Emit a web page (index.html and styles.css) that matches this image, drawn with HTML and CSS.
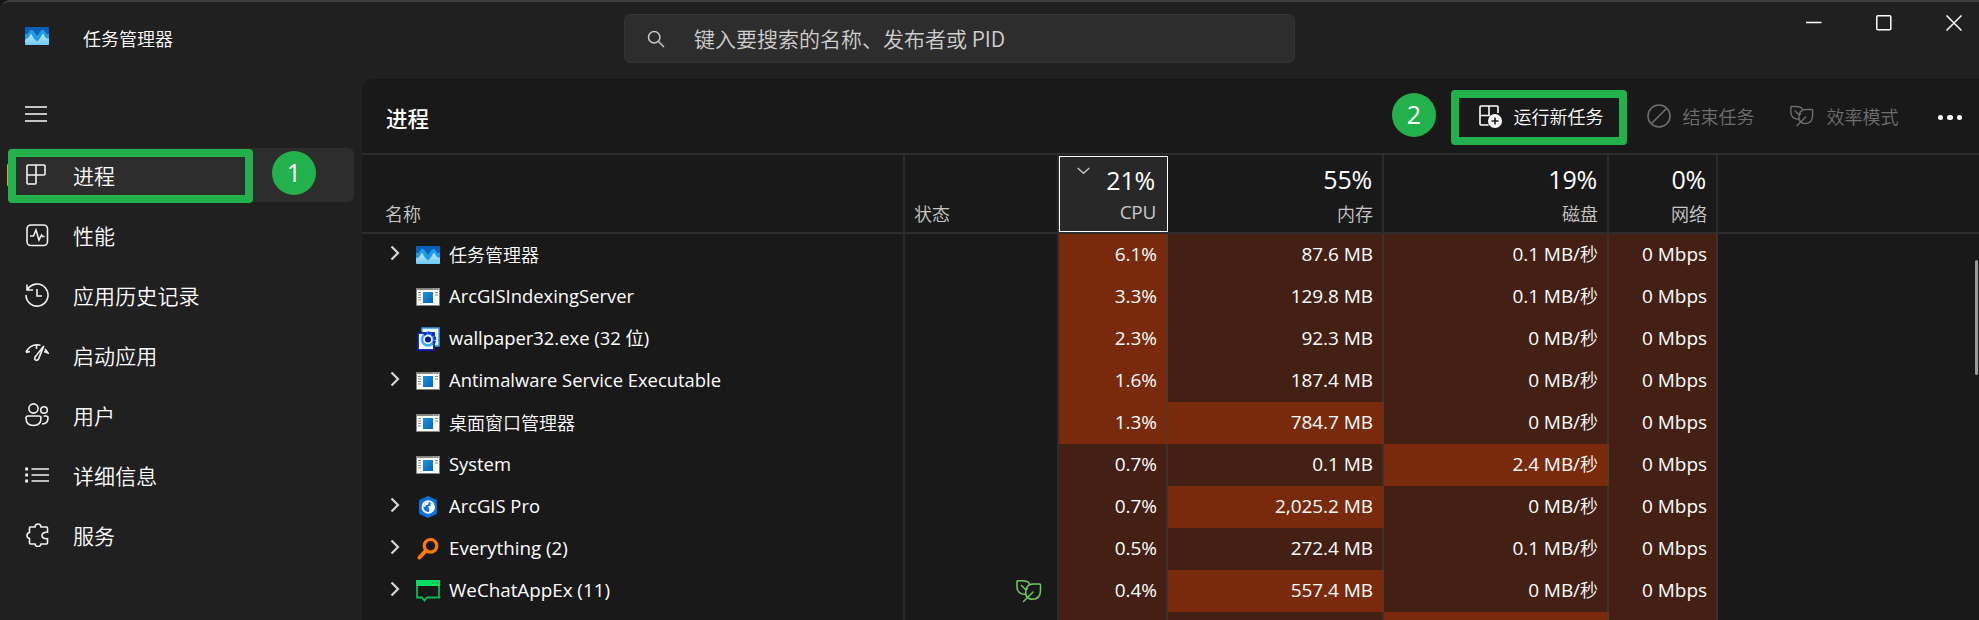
FILE: index.html
```html
<!DOCTYPE html>
<html lang="zh-CN">
  <head>
    <meta charset="utf-8">
    <title>任务管理器</title>
    <link rel="stylesheet" href="styles.css">
  </head>

  <body>
    <svg class="sprite">
      <linearGradient id="gTop" x1="0" y1="0" x2="0" y2="1"><stop offset="0" stop-color="#0a5fb4"/><stop offset="1" stop-color="#0c66bd"/></linearGradient>
      <linearGradient id="gFront" x1="0" y1="0" x2="0" y2="1"><stop offset="0" stop-color="#c5ecff"/><stop offset="1" stop-color="#6cc8f8"/></linearGradient>
      <linearGradient id="gApp" x1="0" y1="0" x2="1" y2="1"><stop offset="0" stop-color="#1b95e0"/><stop offset="1" stop-color="#0565b8"/></linearGradient>
      <symbol id="taskmgr" viewBox="0 0 24 18">
        <rect width="24" height="18" rx="1" fill="url(#gTop)"/>
        <path d="M0 7h2.500L5 3.500q1.500-1.500 3 0L12 9l4-5.500q1.500-1.500 3 0L21.500 7H24v9H0z" fill="#1e9be6"/>
        <path d="M0 12.500q2-.5 3.500-2L6 6.500l2.500 4.500q2 2 3.500 3.500 2-1.500 3.500-4L18 6.500l2.500 4q1.500 1.500 3.500 1V17q0 1-1 1H1q-1 0-1-1z" fill="url(#gFront)"/>
      </symbol>
      <symbol id="exe" viewBox="0 0 24 18">
        <rect width="24" height="18" fill="#85857f"/>
        <rect x="1" y="2" width="22" height="15" fill="#fff"/>
        <path d="M17 1h1M19.500 1h1M22 1h1" stroke="#ddd"/>
        <path d="M2 4.500h3M2 7h3M2 9.500h3M2 12h3M19 4.500h3M19 7h3" stroke="#8a8a8a"/>
        <rect x="7" y="4" width="10" height="11" fill="url(#gApp)"/>
      </symbol>
      <symbol id="wallpaper" viewBox="0 0 24 24">
        <rect x="6" y="1" width="17" height="18" fill="#e8f5ff" stroke="#3b9ce6" stroke-width="1.500"/>
        <rect x="2" y="6" width="16" height="17" fill="#f4f8ff" stroke="#0a1fae" stroke-width="1.800"/>
        <circle cx="12" cy="12.500" r="6" fill="none" stroke="#3fa9f5" stroke-width="2.500"/>
        <path d="M8 7.500q5-3.500 9 .5 4 5-.5 9.500" fill="none" stroke="#0a2fc0" stroke-width="2.800" stroke-dasharray="3 1"/>
        <circle cx="12" cy="12.500" r="3" fill="#08129a"/>
      </symbol>
      <symbol id="arcgis" viewBox="0 0 24 26">
        <path d="M12 1l9.500 4.500q.5 8 0 15L12 25l-9.500-4.500q-.5-8 0-15z" fill="#0f6fe0"/>
        <circle cx="12.300" cy="13" r="6.300" fill="#0f6fe0" stroke="#fff" stroke-width="2"/>
        <path d="M9 8l4-.5-1 3-2.500.5-.5 2-2-.5zM12 12.500l3-1-.5-3 3.500 2 .5 3.500-3 4.500-2.500.5.500-3z" fill="#fff"/>
      </symbol>
      <symbol id="everything" viewBox="0 0 24 24">
        <circle cx="14.500" cy="8.800" r="6.300" fill="none" stroke="#ff7a00" stroke-width="3.200"/>
        <path d="M10 13.500l-6.500 7" stroke="#ff7a00" stroke-width="4" stroke-linecap="round"/>
      </symbol>
      <symbol id="wechat" viewBox="0 0 24 22">
        <path d="M1 3v14.500h5l2.500 3 2.500-3h12V3" fill="none" stroke="#07b853" stroke-width="1.800"/>
        <rect width="24" height="6" fill="#07dc66"/>
        <path d="M16 3h1.200M18.500 3h1.200M21 3h1.200" stroke="#067a3c" stroke-width="1.200"/>
      </symbol>
      <symbol id="leaf" viewBox="0 0 26 24">
        <path d="M9.500 15.500Q1 15 1 8V2.500q0-.8.800-.8h4.700q5.500 0 7 3M10 16.500q-1.600-11.500 7.500-11.500h6.200q.8 0 .8.800v5.500q0 9-8.500 9-3.500 0-6-3.800zM7.500 22.500l9.500-9.500M5.500 6.500l4.500 4.500 1.500-1.500" fill="none" stroke="currentColor" stroke-width="1.500" stroke-linecap="round" stroke-linejoin="round"/>
      </symbol>
      <symbol id="chevron" viewBox="0 0 10 16">
        <path d="M1.500 1.500L8 8l-6.500 6.500" fill="none" stroke="#d6d6d6" stroke-width="2.200"/>
      </symbol>
    </svg>

    <div class="window">
      <header class="titlebar">
        <svg class="logo"><use href="#taskmgr"/></svg>
        <span class="app-name">任务管理器</span>
        <div class="search">
          <svg width="18" height="18" viewBox="0 0 18 18" fill="none" stroke="#c8c8c8" stroke-width="1.500"><circle cx="7.200" cy="7.200" r="5.700"/><path d="M11.500 11.500l5.500 5.500"/></svg>
          <span>键入要搜索的名称、发布者或 PID</span>
        </div>
        <div class="win-controls">
          <svg viewBox="0 0 16 16"><path d="M0 7.500h15.500"/></svg>
          <svg viewBox="0 0 16 16"><rect x=".8" y=".8" width="14" height="14" rx="1"/></svg>
          <svg viewBox="0 0 16 16"><path d="M.5.5l15 15M15.500.5l-15 15"/></svg>
        </div>
      </header>

      <div class="content">
        <nav class="sidebar">
          <div class="hamburger"><i></i><i></i><i></i></div>
          <div class="nav-item active">
            <svg viewBox="0 0 24 24"><path d="M3 2h16q1 0 1 1v8q0 1-1 1h-8v8q0 1-1 1H3q-1 0-1-1V3q0-1 1-1zM11 2v10M2 12h9"/></svg>
            <span>进程</span>
          </div>
          <div class="nav-item">
            <svg viewBox="0 0 24 24"><rect x="2" y="2" width="20.500" height="20.500" rx="4"/><path d="M5 13h3.500l2.500-6 3 10 2.500-5 1 1.500h2"/></svg>
            <span>性能</span>
          </div>
          <div class="nav-item">
            <svg viewBox="0 0 24 24"><path d="M2.500 6.500A11 11 0 1 1 1 12M2 1.500V7h6M12 6v7h5"/></svg>
            <span>应用历史记录</span>
          </div>
          <div class="nav-item">
            <svg viewBox="0 0 24 24"><path d="M1 9q4-7.200 11-7.200 2 0 3.500.5M1 9.500l4-1M11.500 2v4M20 6l3 4-4-1.500M18.800 3l-5.300 13q-1.400 2-3 1-1.200-1-.5-2.800z"/></svg>
            <span>启动应用</span>
          </div>
          <div class="nav-item">
            <svg viewBox="0 0 24 24"><circle cx="8.500" cy="5.500" r="4.600"/><circle cx="19" cy="7" r="3.300"/><path d="M3 13h11q2 0 2 2 0 7.500-7.500 7.500T1 15q0-2 2-2zM18.500 13H21q2 0 2 2 0 6-6 6"/></svg>
            <span>用户</span>
          </div>
          <div class="nav-item">
            <svg viewBox="0 0 24 24"><path d="M6.500 6H24M6.500 12H24M6.500 18H24"/><path d="M.2 6H3M.2 12H3M.2 18H3" stroke-width="2.800"/></svg>
            <span>详细信息</span>
          </div>
          <div class="nav-item">
            <svg viewBox="0 0 24 24"><path d="M5 4h5q.2-3 3-3t3 3h5.500q1 0 1 1v4.300q-5.500-.3-5.500 3.200t5.500 3.200V20q0 1-1 1H16q-.2 2.500-3 2.500T10 21H5.500q-1 0-1-1v-4.500Q2 15 2 12.500t2.500-3V5q0-1 .5-1z"/></svg>
            <span>服务</span>
          </div>
        </nav>

        <main class="panel">
          <div class="toolbar">
            <h1>进程</h1>
            <div class="tool run">
              <svg viewBox="0 0 24 24"><path d="M10.500 21H3q-1 0-1-1V3q0-1 1-1h16q1 0 1 1v6M11 2v10M2 11.500h10"/><circle cx="17" cy="17" r="7" fill="#fff" stroke="none"/><path d="M17 13.500v7M13.500 17h7" stroke="#1a1a1a"/></svg>
              <span>运行新任务</span>
            </div>
            <div class="tool end disabled">
              <svg viewBox="0 0 24 24"><circle cx="12" cy="12" r="11"/><path d="M4.500 19.500l15-15"/></svg>
              <span>结束任务</span>
            </div>
            <div class="tool eco disabled">
              <svg viewBox="0 0 26 24"><use href="#leaf"/></svg>
              <span>效率模式</span>
            </div>
            <div class="more"><i></i><i></i><i></i></div>
          </div>

          <div class="grid head">
            <div class="name">名称</div>
            <div class="status">状态</div>
            <div class="col sorted">
              <svg width="13" height="8" viewBox="0 0 13 8"><path d="M.7 1l5.800 5.300L12.300 1" fill="none" stroke="#c8c8c8" stroke-width="1.300"/></svg>
              <b>21%</b><span class="latin">CPU</span>
            </div>
            <div class="col"><b>55%</b><span>内存</span></div>
            <div class="col"><b>19%</b><span>磁盘</span></div>
            <div class="col"><b>0%</b><span>网络</span></div>
          </div>

          <div class="grid row">
            <div class="name"><svg class="arrow"><use href="#chevron"/></svg><svg class="icon"><use href="#taskmgr"/></svg><span class="zh">任务管理器</span></div>
            <div class="status"></div>
            <div class="val hot">6.1%</div><div class="val">87.6 MB</div><div class="val">0.1 MB/<i>秒</i></div><div class="val">0 Mbps</div>
          </div>
          <div class="grid row">
            <div class="name"><svg class="arrow"></svg><svg class="icon"><use href="#exe"/></svg><span>ArcGISIndexingServer</span></div>
            <div class="status"></div>
            <div class="val hot">3.3%</div><div class="val">129.8 MB</div><div class="val">0.1 MB/<i>秒</i></div><div class="val">0 Mbps</div>
          </div>
          <div class="grid row">
            <div class="name"><svg class="arrow"></svg><svg class="icon tall"><use href="#wallpaper"/></svg><span>wallpaper32.exe (32 位)</span></div>
            <div class="status"></div>
            <div class="val hot">2.3%</div><div class="val">92.3 MB</div><div class="val">0 MB/<i>秒</i></div><div class="val">0 Mbps</div>
          </div>
          <div class="grid row">
            <div class="name"><svg class="arrow"><use href="#chevron"/></svg><svg class="icon"><use href="#exe"/></svg><span>Antimalware Service Executable</span></div>
            <div class="status"></div>
            <div class="val hot">1.6%</div><div class="val">187.4 MB</div><div class="val">0 MB/<i>秒</i></div><div class="val">0 Mbps</div>
          </div>
          <div class="grid row">
            <div class="name"><svg class="arrow"></svg><svg class="icon"><use href="#exe"/></svg><span class="zh">桌面窗口管理器</span></div>
            <div class="status"></div>
            <div class="val hot">1.3%</div><div class="val hot">784.7 MB</div><div class="val">0 MB/<i>秒</i></div><div class="val">0 Mbps</div>
          </div>
          <div class="grid row">
            <div class="name"><svg class="arrow"></svg><svg class="icon"><use href="#exe"/></svg><span>System</span></div>
            <div class="status"></div>
            <div class="val">0.7%</div><div class="val">0.1 MB</div><div class="val hot">2.4 MB/<i>秒</i></div><div class="val">0 Mbps</div>
          </div>
          <div class="grid row">
            <div class="name"><svg class="arrow"><use href="#chevron"/></svg><svg class="icon tall"><use href="#arcgis"/></svg><span>ArcGIS Pro</span></div>
            <div class="status"></div>
            <div class="val">0.7%</div><div class="val hot">2,025.2 MB</div><div class="val">0 MB/<i>秒</i></div><div class="val">0 Mbps</div>
          </div>
          <div class="grid row">
            <div class="name"><svg class="arrow"><use href="#chevron"/></svg><svg class="icon tall"><use href="#everything"/></svg><span class="wide">Everything (2)</span></div>
            <div class="status"></div>
            <div class="val">0.5%</div><div class="val">272.4 MB</div><div class="val">0.1 MB/<i>秒</i></div><div class="val">0 Mbps</div>
          </div>
          <div class="grid row">
            <div class="name"><svg class="arrow"><use href="#chevron"/></svg><svg class="icon tall"><use href="#wechat"/></svg><span class="wide">WeChatAppEx (11)</span></div>
            <div class="status"><svg class="eco-leaf"><use href="#leaf"/></svg></div>
            <div class="val">0.4%</div><div class="val hot">557.4 MB</div><div class="val">0 MB/<i>秒</i></div><div class="val">0 Mbps</div>
          </div>
          <div class="grid row">
            <div class="name"></div>
            <div class="status"></div>
            <div class="val"></div><div class="val"></div><div class="val hot"></div><div class="val"></div>
          </div>
          <div class="scrollbar"></div>
        </main>
      </div>

      <!-- step markers -->
      <div class="mark mark-nav"></div>
      <div class="step step-1">1</div>
      <div class="mark mark-run"></div>
      <div class="step step-2">2</div>
    </div>
  </body>
</html>
```
FILE: styles.css
```css
* {
  box-sizing: border-box;
}
body {
  margin: 0;
  background: #141414;
  color: #fff;
  font-family: "Open Sans", "Noto Sans CJK SC", sans-serif;
  font-size: 18px;
  overflow: hidden;
}
svg {
  display: block;
  flex: none;
}
.sprite {
  position: absolute;
  width: 0;
  height: 0;
}
.window {
  position: relative;
  width: 1979px;
  height: 620px;
  overflow: hidden;
  background: #202020;
  border-top: 2px solid #3d3d3d;
  border-top-left-radius: 10px;
}

/* title bar */
.titlebar {
  display: flex;
  align-items: flex-start;
  height: 77px;
  font-weight: 350;
}
.logo {
  width: 24px;
  height: 18px;
  margin: 25px 0 0 25px;
}
.app-name {
  width: 541px;
  margin: 23px 0 0 34px;
  line-height: 26px;
  font-family: "Noto Sans CJK SC", sans-serif;
}
.search {
  display: flex;
  align-items: center;
  width: 671px;
  height: 49px;
  margin-top: 12px;
  padding-left: 22px;
  background: #2d2d2d;
  border: 1px solid #343434;
  border-radius: 6px;
  color: #cfcfcf;
  font-family: "Noto Sans CJK SC", sans-serif;
  font-size: 21px;
}
.search span {
  margin: 0 0 1px 29px;
}
.win-controls {
  display: flex;
  gap: 54px;
  margin: 13px 17px 0 auto;
}
.win-controls svg {
  width: 16px;
  height: 16px;
  fill: none;
  stroke: #fff;
  stroke-width: 1.5;
}

/* sidebar */
.content {
  display: flex;
  height: 541px;
}
.sidebar {
  width: 362px;
  padding: 27px 8px 0;
}
.hamburger {
  display: flex;
  flex-direction: column;
  gap: 5px;
  width: 22px;
  margin: 0 0 26px 17px;
}
.hamburger i {
  height: 2px;
  background: #c4c4c4;
}
.nav-item {
  display: flex;
  align-items: center;
  position: relative;
  height: 54px;
  margin-bottom: 6px;
  padding-left: 17px;
  border-radius: 6px;
  font-family: "Noto Sans CJK SC", sans-serif;
  font-size: 21px;
  font-weight: 350;
  letter-spacing: 0.1px;
}
.nav-item.active {
  width: 346px;
  background: #2d2d2d;
}
.nav-item.active::before {
  content: "";
  position: absolute;
  left: -1px;
  top: 16px;
  width: 3px;
  height: 22px;
  border-radius: 1px;
  background: #e0a030;
}
.nav-item svg {
  width: 24px;
  height: 24px;
  margin-bottom: 1px;
  fill: none;
  stroke: #f2f2f2;
  stroke-width: 1.6;
}
.nav-item span {
  margin-left: 24px;
}

/* main panel */
.panel {
  position: relative;
  flex: 1;
  background: #191919;
  border-top-left-radius: 10px;
  overflow: hidden;
}
.toolbar {
  display: flex;
  align-items: center;
  height: 76px;
  padding: 0 17px 0 24px;
  border-bottom: 2px solid #2d2d2d;
  font-family: "Noto Sans CJK SC", sans-serif;
  font-weight: 350;
}
h1 {
  margin: 2px auto 0 0;
  font-size: 21.5px;
  font-weight: 500;
}
.tool {
  display: flex;
  align-items: center;
}
.tool svg {
  width: 24px;
  height: 24px;
  fill: none;
  stroke: #fff;
  stroke-width: 1.6;
}
.tool span {
  margin: 0 0 1px 12px;
}
.run {
  margin-right: 43px;
}
.end {
  margin-right: 35px;
}
.tool.eco span {
  margin-left: 13px;
}
.disabled {
  color: #6e6e6e;
}
.disabled svg {
  stroke: #6e6e6e;
}
.more {
  display: flex;
  gap: 4px;
  margin: 3px 0 0 39px;
}
.more i {
  width: 5.5px;
  height: 5.5px;
  border-radius: 50%;
  background: #fff;
}

/* process table */
.grid {
  display: grid;
  grid-template-columns: 543px 154px 109px 216px 225px 109px;
}
.grid > div {
  border-right: 2px solid rgba(64, 64, 64, 0.5);
}
.head {
  height: 79px;
  border-bottom: 2px solid #2d2d2d;
  color: #c8c8c8;
  font-family: "Noto Sans CJK SC", sans-serif;
  font-weight: 350;
}
.head .name,
.head .status {
  display: block;
  padding: 45px 0 0 23px;
  line-height: 26px;
}
.head .status {
  padding-left: 9px;
}
.col {
  display: flex;
  flex-direction: column;
  align-items: flex-end;
  padding: 8px 9px 0 0;
}
.col b {
  color: #fff;
  font-family: "Open Sans", sans-serif;
  font-size: 25px;
  font-weight: 400;
  line-height: 32px;
  letter-spacing: -0.2px;
  margin-right: 1px;
}
.col span {
  margin-top: 5px;
  line-height: 26px;
}
.col .latin {
  margin-top: 3px;
  font-family: "Open Sans", sans-serif;
  font-size: 19px;
  font-weight: 400;
  letter-spacing: -0.3px;
}
.head .sorted {
  position: relative;
  margin-top: 1px;
  background: #282828;
  border: 1px solid #fff;
  padding: 7px 11px 0 0;
}
.sorted svg {
  position: absolute;
  left: 17px;
  top: 10px;
}
.row {
  height: 42px;
}
.name {
  display: flex;
  align-items: center;
  padding-left: 28px;
}
.row .name span {
  margin-left: 9px;
  padding-bottom: 2px;
  font-size: 18.4px;
  line-height: 40px;
}
.row .name .wide {
  font-size: 18.8px;
}
.row .name .zh {
  font-family: "Noto Sans CJK SC", sans-serif;
  font-size: 18px;
  font-weight: 350;
}
.arrow {
  width: 10px;
  height: 16px;
  margin: 0 16px 4px 0;
}
.icon {
  width: 24px;
  height: 18px;
}
.icon.tall {
  height: 24px;
}
.row .status {
  display: flex;
  align-items: center;
  justify-content: flex-end;
  padding-right: 15px;
  color: #6ccb5f;
}
.eco-leaf {
  width: 26px;
  height: 24px;
}
.val {
  padding-right: 9px;
  background: #441f14;
  font-size: 19px;
  line-height: 40px;
  letter-spacing: -0.05px;
  text-align: right;
}
.val i {
  font-size: 18px;
  font-style: normal;
  font-weight: 350;
}
.val.hot {
  background: #7a2a0c;
}
.scrollbar {
  position: absolute;
  top: 181px;
  right: 1px;
  width: 3px;
  height: 115px;
  border-radius: 2px;
  background: #9a9a9a;
}

/* step markers over the window */
.mark {
  position: absolute;
  border: 8px solid #22b14c;
  border-radius: 4px;
}
.mark-nav {
  left: 8px;
  top: 147px;
  width: 245px;
  height: 54px;
}
.mark-run {
  left: 1451px;
  top: 88px;
  width: 176px;
  height: 55px;
}
.step {
  position: absolute;
  width: 44px;
  height: 44px;
  border-radius: 50%;
  background: #22b14c;
  font-size: 25px;
  line-height: 43px;
  text-align: center;
}
.step-1 {
  left: 272px;
  top: 149px;
}
.step-2 {
  left: 1392px;
  top: 91px;
}
```
